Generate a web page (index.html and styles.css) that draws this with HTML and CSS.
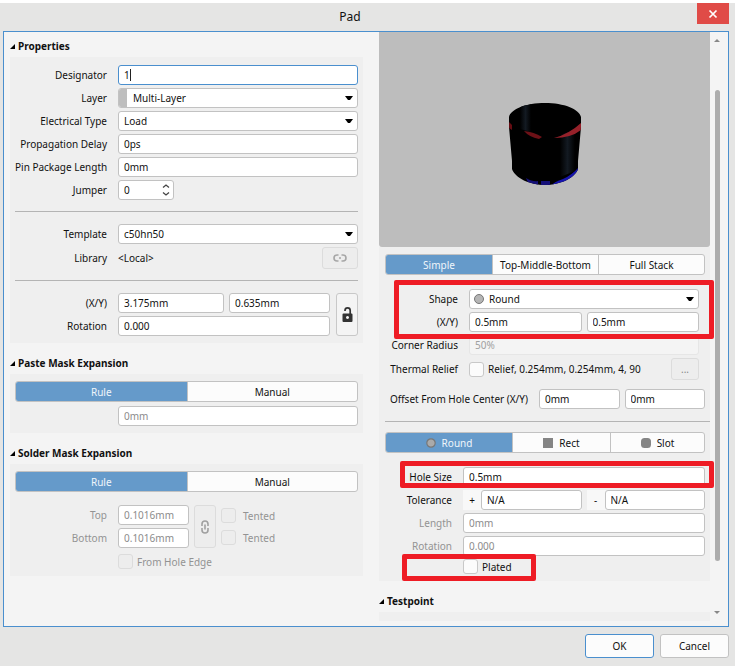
FILE: index.html
```html
<!DOCTYPE html>
<html lang="en">
<head>
<meta charset="utf-8">
<title>Pad</title>
<link rel="stylesheet" href="styles.css">
</head>
<body>
<div class="dialog">
  <header class="titlebar">
    <h1>Pad</h1>
    <button class="close" type="button" aria-label="Close"><svg width="10" height="10" viewBox="0 0 10 10"><path d="M1.5 1.5 8.5 8.5M8.5 1.5 1.5 8.5" stroke="#fff" stroke-width="1.7" fill="none"/></svg></button>
  </header>

  <main class="body">
    <div class="column left">
      <h2 class="first"><svg class="tri" viewBox="0 0 5 5"><path d="M5 0V5H0Z"/></svg>Properties</h2>
      <section class="panel">
        <div class="rows">
          <label for="designator">Designator</label>
          <div class="typing"><input class="field focus" id="designator" value="1"><span class="cursor"></span></div>
          <label for="layer">Layer</label>
          <div class="select swatched"><select id="layer"><option>Multi-Layer</option></select><span class="swatch"></span><svg class="caret" viewBox="0 0 8 5"><path d="M0 0H8L5 4H3Z"/></svg></div>
          <label for="etype">Electrical Type</label>
          <div class="select"><select id="etype"><option>Load</option></select><svg class="caret" viewBox="0 0 8 5"><path d="M0 0H8L5 4H3Z"/></svg></div>
          <label for="delay">Propagation Delay</label>
          <input class="field" id="delay" value="0ps">
          <label for="pinlen">Pin Package Length</label>
          <input class="field" id="pinlen" value="0mm">
          <label for="jumper">Jumper</label>
          <div class="spin"><input class="field" id="jumper" value="0"><svg class="steps" viewBox="0 0 8 12"><path d="M1 3.5 4 1 7 3.5M1 8.5 4 11 7 8.5" fill="none" stroke="#444" stroke-width="1.3"/></svg></div>
        </div>
        <hr>
        <div class="rows">
          <label for="template">Template</label>
          <div class="select"><select id="template"><option>c50hn50</option></select><svg class="caret" viewBox="0 0 8 5"><path d="M0 0H8L5 4H3Z"/></svg></div>
          <span class="name">Library</span>
          <div class="library"><span>&lt;Local&gt;</span><button class="tool wide" type="button" disabled aria-label="Link library"><svg width="14" height="8" viewBox="0 0 14 8"><path d="M5.5 1H4a3 3 0 0 0 0 6h1.5M8.5 1H10a3 3 0 0 1 0 6H8.5M6 4h2" fill="none" stroke="#a6a6a6" stroke-width="1.6"/></svg></button></div>
        </div>
        <hr>
        <div class="locked">
          <div class="rows">
            <label for="px">(X/Y)</label>
            <div class="pair place"><input class="field" id="px" value="3.175mm"><input class="field" aria-label="Y" value="0.635mm"></div>
            <label for="rot">Rotation</label>
            <input class="field" id="rot" value="0.000">
          </div>
          <button class="tool lock" type="button" aria-label="Lock"><svg width="11" height="15" viewBox="0 0 11 15"><path d="M3 4V3.5a2.5 2.5 0 0 1 5.2 0V7" fill="none" stroke="#333" stroke-width="1.7"/><path fill="#333" fill-rule="evenodd" d="M1.5 6.5H9.5a1 1 0 0 1 1 1V14a1 1 0 0 1-1 1H1.5a1 1 0 0 1-1-1V7.5a1 1 0 0 1 1-1ZM5.5 9a1.5 1.5 0 1 0 .01 0Z"/></svg></button>
        </div>
      </section>

      <h2><svg class="tri" viewBox="0 0 5 5"><path d="M5 0V5H0Z"/></svg>Paste Mask Expansion</h2>
      <section class="panel">
        <div class="segments"><button class="on" type="button">Rule</button><button type="button">Manual</button></div>
        <div class="rows after"><span></span><input class="field" aria-label="Paste mask expansion" value="0mm" disabled></div>
      </section>

      <h2><svg class="tri" viewBox="0 0 5 5"><path d="M5 0V5H0Z"/></svg>Solder Mask Expansion</h2>
      <section class="panel">
        <div class="segments"><button class="on" type="button">Rule</button><button type="button">Manual</button></div>
        <div class="mask">
          <div class="rows">
            <label class="dim" for="top">Top</label><input class="field" id="top" value="0.1016mm" disabled>
            <label class="dim" for="bottom">Bottom</label><input class="field" id="bottom" value="0.1016mm" disabled>
          </div>
          <button class="tool chain" type="button" disabled aria-label="Link top and bottom"><svg width="8" height="14" viewBox="0 0 8 14"><path d="M1 6V4a3 3 0 0 1 6 0v2M1 8V10a3 3 0 0 0 6 0V8M4 4.5v5" fill="none" stroke="#a0a0a0" stroke-width="1.6"/></svg></button>
          <div class="tents">
            <label class="check dim"><input type="checkbox" disabled>Tented</label>
            <label class="check dim"><input type="checkbox" disabled>Tented</label>
          </div>
        </div>
        <div class="rows edge"><span></span><label class="check near dim"><input type="checkbox" disabled>From Hole Edge</label></div>
      </section>
    </div>

    <div class="column">
      <div class="preview">
        <svg width="72" height="82" viewBox="0 0 72 82" role="img" aria-label="Pad preview">
          <defs>
            <linearGradient id="sheen"><stop offset="0" stop-color="#000"/><stop offset=".5" stop-color="#131a22"/><stop offset="1" stop-color="#000"/></linearGradient>
            <clipPath id="body"><path d="M0 14C2 6 17 0 36 0S70 6 72 14V24L69 58V66C66 75 51 82 36 82S6 75 3 66V58L0 24Z"/></clipPath>
          </defs>
          <g clip-path="url(#body)">
            <path d="M0 0H72V82H0Z"/>
            <path d="M11 0H22V29L11 26Z" fill="url(#sheen)"/>
            <path d="M51 32 66 27V68L51 74Z" fill="url(#sheen)"/>
            <path d="M0 19 3 22V27L0 25Z" fill="#650c12"/>
            <path d="M15 28Q25 29 33 34L30 36Q20 34 15 28Z" fill="#6d1117"/>
            <path d="M45 35Q60 31 72 20V27Q62 35 45 35Z" fill="#96212a"/>
            <path d="M43 82Q45 79 54 76Q63 72 70 64V74L60 82Z" fill="#1715ad"/>
            <path d="M17 75Q24 79 29 78V82H20ZM32 78H41V82H32Z" fill="#151078"/>
          </g>
        </svg>
      </div>
      <section class="panel stack">
        <div class="segments"><button class="on" type="button">Simple</button><button type="button">Top-Middle-Bottom</button><button type="button">Full Stack</button></div>
        <div class="marked shape">
          <div class="rows">
            <label for="shape">Shape</label>
            <div class="select iconic"><select id="shape"><option>Round</option></select><svg class="dot" viewBox="0 0 10 10"><circle cx="5" cy="5" r="4.5" fill="#b5b5b5" stroke="#777"/></svg><svg class="caret" viewBox="0 0 8 5"><path d="M0 0H8L5 4H3Z"/></svg></div>
            <label for="sx">(X/Y)</label>
            <div class="pair"><input class="field" id="sx" value="0.5mm"><input class="field" aria-label="Y size" value="0.5mm"></div>
          </div>
          <span class="mark"></span>
        </div>
        <div class="rows upper">
          <label for="radius">Corner Radius</label>
          <input class="field faint" id="radius" value="50%" disabled>
          <span class="name">Thermal Relief</span>
          <div class="library"><label class="check near"><input type="checkbox">Relief, 0.254mm, 0.254mm, 4, 90</label><button class="tool more" type="button" disabled>...</button></div>
        </div>
        <div class="offset"><label for="ox">Offset From Hole Center (X/Y)</label><div class="pair"><input class="field" id="ox" value="0mm"><input class="field" aria-label="Y offset" value="0mm"></div></div>
        <hr>
        <div class="segments holes">
          <button class="on" type="button"><svg width="10" height="10" viewBox="0 0 10 10"><circle cx="5" cy="5" r="4.2" fill="#aaa" stroke="#777" stroke-width="1.2"/></svg>Round</button>
          <button type="button"><svg width="10" height="10" viewBox="0 0 10 10"><path d="M0 0H10V10H0Z" fill="#858585"/></svg>Rect</button>
          <button type="button"><svg width="10" height="10" viewBox="0 0 10 10"><rect width="10" height="10" rx="3.5" fill="#858585"/></svg>Slot</button>
        </div>
        <div class="marked hole">
          <div class="rows"><label for="hole">Hole Size</label><input class="field" id="hole" value="0.5mm"></div>
          <span class="mark"></span>
        </div>
        <div class="rows lower">
          <label for="tol">Tolerance</label>
          <div class="pair"><div class="signed"><span>+</span><input class="field" id="tol" value="N/A"></div><div class="signed"><span>-</span><input class="field" aria-label="Minus tolerance" value="N/A"></div></div>
          <label class="dim" for="len">Length</label><input class="field" id="len" value="0mm" disabled>
          <label class="dim" for="hrot">Rotation</label><input class="field" id="hrot" value="0.000" disabled>
        </div>
        <div class="marked plated">
          <div class="rows"><span></span><label class="check near"><input type="checkbox">Plated</label></div>
          <span class="mark"></span>
        </div>
      </section>
      <h2><svg class="tri" viewBox="0 0 5 5"><path d="M5 0V5H0Z"/></svg>Testpoint</h2>
      <section class="stub"></section>
    </div>

    <div class="scroll" aria-hidden="true">
      <svg width="6" height="3" viewBox="0 0 6 3"><path d="M0 3 3 0 6 3Z" fill="#888"/></svg>
      <span class="thumb"></span>
      <svg width="6" height="3" viewBox="0 0 6 3"><path d="M0 0 3 3 6 0Z" fill="#888"/></svg>
    </div>
  </main>

  <footer>
    <button class="action default" type="button">OK</button>
    <button class="action" type="button">Cancel</button>
  </footer>
</div>
</body>
</html>
```
FILE: styles.css
```css
* { box-sizing: border-box; }

body {
  margin: 0;
  background: #fff;
  color: #111;
  font: 10px/16px "Noto Sans", "Open Sans", sans-serif;
}

button, input, select { font: inherit; color: inherit; margin: 0; }
button { padding: 0; }
svg { flex: none; }

.dialog {
  min-height: 100vh;
  border-top: 3px solid #fff;
  padding: 0 6px 0 3px;
  background: #e5e5e4;
}

.titlebar { display: flex; height: 28px; }
.titlebar h1 {
  flex: 1;
  margin: 0;
  font-size: 12px;
  font-weight: 400;
  line-height: 27px;
  text-align: center;
}
.close {
  display: grid;
  place-items: center;
  width: 32px;
  height: 21px;
  border: 0;
  background: #e04b47;
}

.body {
  display: grid;
  grid-template-columns: minmax(0, 369fr) minmax(0, 331fr) 18px;
  border: 1px solid #4a8fce;
  padding-left: 6px;
  background: #f4f4f4;
}
.left { margin-right: 16px; }

h2 {
  display: flex;
  align-items: center;
  gap: 3px;
  height: 31px;
  margin: 0;
  padding-top: 9px;
  font-size: 10px;
  font-weight: 700;
}
h2.first { height: 25px; padding-top: 3px; }
.tri { width: 5px; height: 5px; }

.panel { padding: 8px 5px 7px; background: #efefef; }
.panel:has(> .segments) { padding-top: 7px; }
.panel.stack { padding-left: 6px; }

hr {
  height: 1px;
  margin: 11px 0 12px;
  border: 0;
  background: #b4b4b4;
}

.rows {
  display: grid;
  grid-template-columns: 92px minmax(0, 1fr);
  gap: 3px 11px;
  align-items: center;
}
.rows > label:not(.check), .name { text-align: right; white-space: nowrap; }
.rows > .dim:not(.check), .check.dim { color: #939393; }

.field {
  width: 100%;
  min-width: 0;
  height: 20px;
  padding: 0 5px;
  border: 1px solid #c2c2c2;
  border-radius: 3px;
  background: #fff;
  outline: 0;
}
.field:disabled { color: #8c8c8c; }
.field.focus { border-color: #4a8fce; }
.field.faint { border-color: #e6e6e6; background: #f4f4f4; color: #a0a0a0; }
.typing, .spin { position: relative; }
.typing .field { display: block; }
.cursor { position: absolute; left: 12px; top: 4px; width: 1px; height: 12px; background: #222; }

.select { position: relative; }
.select select {
  display: block;
  width: 100%;
  height: 20px;
  padding: 0 5px;
  border: 1px solid #c2c2c2;
  border-radius: 3px;
  background: #fff;
  appearance: none;
}
.caret { position: absolute; right: 5px; top: 8px; width: 8px; height: 5px; pointer-events: none; }
.swatched select { padding-left: 14px; }
.swatch {
  position: absolute;
  inset: 1px auto 1px 1px;
  width: 8px;
  border-radius: 2px 0 0 2px;
  background: #bebebe;
}
.iconic select { padding-left: 19px; }
.dot { position: absolute; left: 5px; top: 5px; width: 10px; height: 10px; }

.spin { width: 56px; }
.steps { position: absolute; right: 4px; top: 4px; width: 8px; height: 12px; }

.library { display: flex; align-items: center; justify-content: space-between; height: 22px; }

.tool {
  display: grid;
  place-items: center;
  border: 1px solid #c8c8c8;
  border-radius: 3px;
  background: #f4f4f4;
}
.tool:disabled { border-color: #dcdcdc; background: #ededed; color: #888; }
.wide { width: 36px; height: 22px; }
.more { width: 28px; height: 22px; }
.lock, .chain { width: 22px; }

.pair { display: flex; gap: 5px; }
.pair > * { flex: 1; }
.place { display: grid; grid-template-columns: 106fr 101fr; }

.locked { display: flex; gap: 6px; }
.locked .rows { flex: 1; }

.segments {
  display: grid;
  grid-auto-flow: column;
  grid-auto-columns: minmax(0, 1fr);
  height: 21px;
  border: 1px solid #c2c2c2;
  border-radius: 3px;
  background: #fcfcfc;
  overflow: hidden;
}
.segments button {
  display: flex;
  align-items: center;
  justify-content: center;
  gap: 6px;
  border: 0;
  border-left: 1px solid #c2c2c2;
  background: none;
  white-space: nowrap;
}
.segments button:first-child { border-left: 0; }
.segments .on { background: #659aca; color: #f0f6fb; }
.holes { grid-template-columns: 126fr 98fr 94fr; }
.after { margin-top: 4px; }

.mask { display: flex; gap: 5px; margin-top: 13px; }
.mask .rows { width: 174px; }
.tents { display: grid; align-content: center; gap: 7px; }
.check { display: flex; align-items: center; gap: 7px; white-space: nowrap; height: 15px; }
.near { gap: 4px; }
.check input {
  width: 15px;
  height: 15px;
  border: 1px solid #c8c8c8;
  border-radius: 3px;
  background: #fbfbfb;
  appearance: none;
}
.check input:disabled { border-color: #dcdcdc; background: #ededed; }
.edge { margin-top: 6px; }

.preview {
  display: grid;
  place-items: center;
  height: 215px;
  padding-top: 9px;
  border-radius: 0 0 3px 3px;
  background: #bdbdbd;
}

.stack .rows { grid-template-columns: 73px minmax(0, 1fr); }
.shape, .upper { padding-right: 6px; }
.shape { margin-top: 14px; }
.upper { margin-top: 3px; }
.offset { display: grid; grid-template-columns: 143px minmax(0, 1fr); gap: 11px; align-items: center; margin-top: 9px; }
.offset label { text-align: right; white-space: nowrap; }
.stack hr { margin: 12px -5px 10px 0; }
.stack .hole .rows, .stack .lower, .stack .plated .rows { grid-template-columns: 67px minmax(0, 1fr); }
.hole { margin-top: 14px; }
.lower { margin-top: 3px; }
.plated { margin-top: 3px; }
.signed { display: flex; background: #f8f8f8; }
.signed span { flex: none; width: 18px; text-align: center; line-height: 20px; }

/* Red callout frames drawn over the highlighted settings */
.marked { position: relative; }
.mark {
  position: absolute;
  z-index: 2;
  border: 5px solid #ee1c25;
  border-radius: 2px;
  pointer-events: none;
}
.shape .mark { inset: -9px -9px -7px 9px; }
.hole .mark { inset: -6px -9px -1px 15px; }
.plated .mark { inset: -5px auto -7px 17px; width: 134px; }

.stub { height: 9px; margin-bottom: 5px; background: #efefef; }

.scroll {
  display: flex;
  flex-direction: column;
  align-items: center;
  padding: 7px 4px 12px 0;
}
.thumb { flex: 1; width: 5px; margin: 48px 0 50px; border-radius: 3px; background: #adadad; }

footer { display: flex; justify-content: flex-end; gap: 6px; padding: 7px 0; }
.action {
  width: 69px;
  height: 24px;
  border: 1px solid #c2c2c2;
  border-radius: 3px;
  background: #fcfcfc;
}
.action.default { border-color: #4a8fce; }
```
